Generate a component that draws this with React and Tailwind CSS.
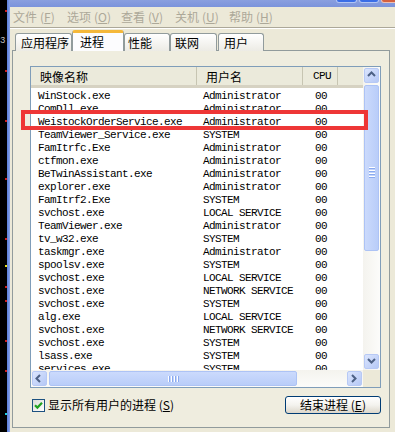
const rows = [
  ["WinStock.exe", "Administrator"],
  ["ComDll.exe", "Administrator"],
  ["WeistockOrderService.exe", "Administrator"],
  ["TeamViewer_Service.exe", "SYSTEM"],
  ["FamItrfc.Exe", "Administrator"],
  ["ctfmon.exe", "Administrator"],
  ["BeTwinAssistant.exe", "Administrator"],
  ["explorer.exe", "Administrator"],
  ["FamItrf2.Exe", "SYSTEM"],
  ["svchost.exe", "LOCAL SERVICE"],
  ["TeamViewer.exe", "Administrator"],
  ["tv_w32.exe", "SYSTEM"],
  ["taskmgr.exe", "Administrator"],
  ["spoolsv.exe", "SYSTEM"],
  ["svchost.exe", "LOCAL SERVICE"],
  ["svchost.exe", "NETWORK SERVICE"],
  ["svchost.exe", "SYSTEM"],
  ["alg.exe", "LOCAL SERVICE"],
  ["svchost.exe", "NETWORK SERVICE"],
  ["svchost.exe", "SYSTEM"],
  ["lsass.exe", "SYSTEM"],
  ["services.exe", "SYSTEM"],
];

const menus = [
  ["文件", "F"],
  ["选项", "O"],
  ["查看", "V"],
  ["关机", "U"],
  ["帮助", "H"],
];

const marks = [
  { top: 10, c: "bg-[#d02020]" },
  { top: 70, c: "bg-[#d02020]" },
  { top: 120, c: "bg-[#d02020]" },
  { top: 178, c: "bg-[#d02020]" },
  { top: 238, c: "bg-[#d02020]" },
  { top: 265, c: "bg-[#e8e020]" },
  { top: 286, c: "bg-[#d02020]" },
  { top: 300, c: "bg-[#d02020]" },
  { top: 340, c: "bg-[#d02020]" },
  { top: 370, c: "bg-[#d02020]" },
  { top: 413, c: "bg-[#20d0e0]" },
];

const Arrow = ({ dir }) => {
  const d = {
    up: "M2 6 L5.5 2.5 L9 6",
    down: "M2 3 L5.5 6.5 L9 3",
    left: "M6 2 L2.5 5.5 L6 9",
    right: "M3 2 L6.5 5.5 L3 9",
  }[dir];
  return (
    <svg width="11" height="11" viewBox="0 0 11 11">
      <path d={d} fill="none" stroke="#4d6185" strokeWidth="2" />
    </svg>
  );
};

const ScrollBtn = ({ dir }) => (
  <div className="w-[17px] h-[17px] p-px shrink-0">
    <div className="w-full h-full rounded-[2px] border border-[#b7c9f5] bg-linear-to-br from-[#dbe5fd] to-[#b5c8f6] flex items-center justify-center">
      <Arrow dir={dir} />
    </div>
  </div>
);

const App = () => {
  return (
    <div className="w-[395px] h-[432px] bg-[#ece9d8] flex overflow-hidden relative font-['Noto_Sans_CJK_SC',sans-serif] text-[12px] text-black">
      {/* desktop chart behind the window */}
      <div className="w-[7px] h-full bg-black relative shrink-0">
        {marks.map((m, i) => (
          <div key={i} className={`absolute right-0 w-[2px] h-[2px] ${m.c}`} style={{ top: m.top }} />
        ))}
        <div className="absolute top-[37px] left-0 text-[9px] leading-none text-[#c0c0c0] font-['Liberation_Mono',monospace]">3</div>
      </div>
      <div className="w-[3px] h-full bg-linear-to-r from-[#5a7edc] to-[#8aa5e8] shrink-0" />

      <div className="flex-1 flex flex-col min-w-0">
        {/* bottom of title bar */}
        <div className="h-[7px] bg-linear-to-b from-[#8a9fdf] to-[#7b93db] flex justify-end items-start gap-[2px] shrink-0">
          <div className="w-[21px] h-[3px] rounded-b-[3px] bg-[#3a6de6] border-x border-b border-white/60" />
          <div className="w-[20px] h-[3px] rounded-b-[3px] bg-[#3a6de6] border-x border-b border-white/60" />
          <div className="w-[14px] h-[3px] rounded-bl-[3px] bg-[#d4603f] border-l border-b border-white/60" />
        </div>

        {/* menu */}
        <div className="h-[20px] flex items-center pl-[3px] text-[#aca899] shrink-0">
          {menus.map(([t, k]) => (
            <div key={t} className="w-[54px] leading-[18px] whitespace-nowrap">
              {t}
              <span className="ml-[3px]">
                (<span className="underline">{k}</span>)
              </span>
            </div>
          ))}
        </div>
        <div className="h-px bg-[#aca899] shrink-0" />
        <div className="h-px bg-white shrink-0" />

        {/* tabs */}
        <div className="h-[22px] flex items-end pl-[5px] shrink-0 relative z-10 -mb-px">
          <div className="w-[57px] h-[18px] pl-[5px] rounded-t-[3px] border border-b-0 border-[#919b9c] bg-linear-to-b from-white to-[#ecebe5] leading-[18px]">应用程序</div>
          <div className="w-[52px] h-[21px] pl-[7px] rounded-t-[3px] border-x border-[#919b9c] border-t-[3px] border-t-[#f5b83a] bg-[#fcfcfe] leading-[18px]">进程</div>
          <div className="w-[46px] h-[18px] pl-[3px] rounded-t-[3px] border border-b-0 border-[#919b9c] bg-linear-to-b from-white to-[#ecebe5] leading-[18px]">性能</div>
          <div className="w-[47px] h-[18px] pl-[4px] rounded-t-[3px] border border-b-0 border-[#919b9c] bg-linear-to-b from-white to-[#ecebe5] leading-[18px]">联网</div>
          <div className="ml-px w-[46px] h-[18px] pl-[5px] rounded-t-[3px] border border-b-0 border-[#919b9c] bg-linear-to-b from-white to-[#ecebe5] leading-[18px]">用户</div>
        </div>

        {/* tab page */}
        <div className="ml-[2px] mr-[5px] h-[378px] border border-[#919b9c] bg-[#efeddf] pl-[17px] pr-[8px] pt-[15px] flex flex-col shrink-0">
          <div className="h-[322px] border border-[#7f9db9] bg-white flex">
            {/* list content */}
            <div className="w-[332px] flex flex-col">
              <div className="h-[21px] flex bg-[#ebeadb] border-b-[3px] border-[#d6d2c2] shrink-0">
                <div className="w-[166px] pl-[9px] leading-[19px] border-r border-[#c7c5b2]">映像名称</div>
                <div className="w-[106px] pl-[9px] leading-[19px] border-r border-[#c7c5b2]">用户名</div>
                <div className="w-[35px] pl-[10px] leading-[19px] border-r border-[#c7c5b2] font-['Liberation_Mono',monospace] text-[11px] tracking-[-0.6px]">CPU</div>
                <div className="flex-1" />
              </div>
              <div className="flex-1 overflow-hidden pt-[2px] font-['Liberation_Mono',monospace] text-[11px] tracking-[-0.6px]">
                {rows.map(([name, user], i) => (
                  <div key={i} className="h-[13px] flex leading-[13px] whitespace-nowrap">
                    <div className="w-[166px] pl-[7px]">{name}</div>
                    <div className="w-[106px] pl-[6px]">{user}</div>
                    <div className="w-[35px] pl-[12px]">00</div>
                  </div>
                ))}
              </div>
              {/* horizontal scrollbar */}
              <div className="h-[17px] flex bg-linear-to-b from-[#f4f3ee] to-[#fcfcfa] shrink-0">
                <ScrollBtn dir="left" />
                <div className="w-[250px] p-px">
                  <div className="w-full h-full rounded-[2px] border border-[#adc3f5] bg-linear-to-b from-[#cbdafc] to-[#b9cdf9] flex items-center justify-center gap-px">
                    {[0, 1, 2, 3].map((i) => (
                      <div key={i} className="w-[2px] h-[6px] border-l border-white bg-[#8aaaf0]" />
                    ))}
                  </div>
                </div>
                <div className="flex-1" />
                <ScrollBtn dir="right" />
              </div>
            </div>

            {/* vertical scrollbar */}
            <div className="flex-1 flex flex-col">
              <div className="flex-1 flex flex-col bg-linear-to-r from-[#f4f3ee] to-[#fcfcfa]">
                <ScrollBtn dir="up" />
                <div className="h-[168px] p-px">
                  <div className="w-full h-full rounded-[2px] border border-[#adc3f5] bg-linear-to-r from-[#cbdafc] to-[#b9cdf9] flex flex-col items-center justify-end pb-[72px] gap-px">
                    {[0, 1, 2, 3].map((i) => (
                      <div key={i} className="w-[6px] h-[2px] border-t border-white bg-[#8aaaf0]" />
                    ))}
                  </div>
                </div>
                <div className="flex-1" />
                <ScrollBtn dir="down" />
              </div>
              <div className="h-[17px] bg-[#ece9d8]" />
            </div>
          </div>

          {/* bottom row */}
          <div className="mt-[8px] h-[18px] flex items-center justify-between pl-[2px]">
            <div className="flex items-center gap-[3px]">
              <div className="w-[13px] h-[13px] border border-[#1c5180] bg-linear-to-br from-[#dcdcd7] to-white flex items-center justify-center">
                <svg width="9" height="9" viewBox="0 0 9 9">
                  <path d="M1 4.2 L3.4 6.6 L8 1.8" fill="none" stroke="#21a121" strokeWidth="2.2" />
                </svg>
              </div>
              <span className="leading-[18px]">
                显示所有用户的进程 (<span className="underline">S</span>)
              </span>
            </div>
            <div className="w-[96px] h-[18px] rounded-[3px] border border-[#003c74] bg-linear-to-b from-white via-[#f4f3ee] to-[#dcd7cb] flex items-center justify-center leading-none">
              结束进程 (<span className="underline">E</span>)
            </div>
          </div>
        </div>
      </div>

      {/* red highlight drawn over the list */}
      <div className="absolute left-[21px] top-[110px] w-[347px] h-[20px] border-4 border-[#ee3636] pointer-events-none" />
    </div>
  );
};

export default App;
